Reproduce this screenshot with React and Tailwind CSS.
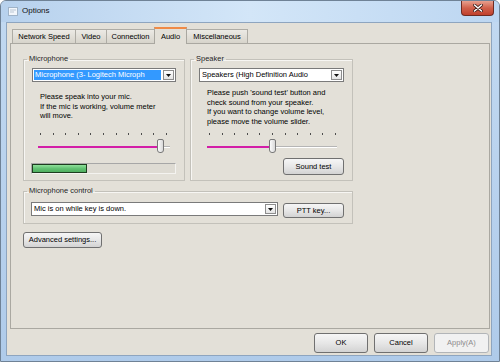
import { Fragment } from 'react';

const tabs = [
  { label: 'Network Speed', width: 'w-[64px]' },
  { label: 'Video', width: 'w-[32px]' },
  { label: 'Connection', width: 'w-[49px]' },
  { label: 'Audio', width: 'w-[33px]', active: true },
  { label: 'Miscellaneous', width: 'w-[62px]' },
];

function DropArrow() {
  return (
    <div className="m-px flex w-[11px] items-center justify-center border border-[#8d8d8d] bg-gradient-to-b from-white to-[#e4e4e4]">
      <svg width="5" height="3" viewBox="0 0 5 3">
        <path d="M0 0H5L2.5 3Z" fill="#111" />
      </svg>
    </div>
  );
}

function Combo({ className, children, selected }) {
  return (
    <div className={`flex h-[14px] border border-[#7a7a7a] bg-white ${className}`}>
      <div className={`m-px flex flex-1 items-center overflow-hidden whitespace-nowrap px-px ${selected ? 'bg-[#3399ff] text-white' : 'text-black'}`}>
        {children}
      </div>
      <DropArrow />
    </div>
  );
}

function Button({ className, children, disabled }) {
  return (
    <div
      className={`flex items-center justify-center rounded-[3px] border ${
        disabled
          ? 'border-[#b2b5b8] bg-[#f1f1f1] text-[#8c8c8c]'
          : 'border-[#707070] bg-gradient-to-b from-[#f6f6f6] via-[#e7e7e7] to-[#d3d3d3] text-black'
      } ${className}`}
    >
      {children}
    </div>
  );
}

function Group({ label, className, children }) {
  return (
    <fieldset className={`border border-[#c3c1ba] shadow-[inset_1px_1px_0_#f7f6f3] ${className}`}>
      <legend className="ml-[3px] px-[2px] leading-[10px] text-[#1e1e1e]">{label}</legend>
      {children}
    </fieldset>
  );
}

function Slider({ className, fillClass, thumbClass, tickPad }) {
  return (
    <div className={`relative h-[23px] ${className}`}>
      <div className={`flex justify-between pt-[2px] ${tickPad}`}>
        {Array.from({ length: 11 }).map((_, i) => (
          <span key={i} className="h-[2px] w-px bg-[#4d4d4d]" />
        ))}
      </div>
      <div className="mt-[11px] flex h-[2px]">
        <div className={`h-full bg-[#d31ea8] ${fillClass}`} />
        <div className="h-full flex-1 border-b border-white bg-[#b5b5b5]" />
      </div>
      <div
        className={`absolute top-[8px] h-[14px] w-[7px] rounded-[2px] rounded-b-[3px] border border-[#787878] bg-gradient-to-r from-[#fbfbfb] to-[#d9d9d9] ${thumbClass}`}
      />
    </div>
  );
}

export default function App() {
  return (
    <div className="flex h-[362px] w-[500px] flex-col overflow-hidden rounded-t-[6px] border border-[#6f8296] bg-gradient-to-b from-[#c2d9f1] to-[#afcbea] font-['Liberation_Sans',Arial,sans-serif] text-[7.5px] text-black">
      {/* title bar */}
      <div className="flex h-[21px] shrink-0 items-start bg-gradient-to-r from-[#b7d1ed] via-[#d3e6f8] to-[#bcd6f1]">
        <svg className="ml-[7px] mt-[6px]" width="10" height="9" viewBox="0 0 10 9">
          <rect x="0.5" y="0.5" width="9" height="8" fill="#f2f6fb" stroke="#9fb3c8" />
          <path d="M2 3H8M2 5H6" stroke="#b9c6d4" />
        </svg>
        <span className="ml-[4px] mt-[5px] text-[8px] leading-[10px] text-[#111]">Options</span>
        <div className="ml-auto mr-[5px] flex h-[15px] w-[33px] items-center justify-center rounded-b-[4px] border border-t-0 border-[#6e2b22] bg-gradient-to-b from-[#e7a08f] via-[#d0604b] to-[#c0402c]">
          <svg width="10" height="8" viewBox="0 0 10 8">
            <path d="M1.5 1L8.5 7M8.5 1L1.5 7" stroke="#3d1a15" strokeWidth="3" strokeLinecap="round" />
            <path d="M1.5 1L8.5 7M8.5 1L1.5 7" stroke="#ffffff" strokeWidth="1.6" strokeLinecap="round" />
          </svg>
        </div>
      </div>

      {/* client area */}
      <div className="mb-[5px] ml-[5px] mr-[7px] flex flex-1 flex-col border border-[#8ea5bf] bg-[#e3e0d8]">
        <div className="pl-[3px] pr-px pt-[4px]">
          <div className="flex h-[16px] items-end pl-[2px]">
            {tabs.map((tab, i) => (
              <div
                key={tab.label}
                className={`flex items-center justify-center border border-b-0 ${tab.width} ${i > 0 ? '-ml-px' : ''} ${
                  tab.active
                    ? 'relative z-10 -mb-px h-[17px] border-[#a9a7a0] border-t-2 border-t-[#f08a46] bg-[#e3e0d8]'
                    : 'h-[14px] border-[#aeaca5] bg-gradient-to-b from-[#eceae5] to-[#d7d4cb]'
                }`}
              >
                {tab.label}
              </div>
            ))}
          </div>

          <div className="h-[286px] border border-[#aaa8a1] bg-[#e3e0d8] pl-[12px] pt-[10px]">
            <div className="flex w-[330px] gap-[5px]">
              <Group label="Microphone" className="w-[162px]">
                <div className="px-[8px] pb-[6px] pt-[4px]">
                  <Combo selected className="w-[144px]">Microphone (3- Logitech Microph</Combo>
                  <div className="ml-[8px] mt-[10px] leading-[9.5px]">
                    Please speak into your mic.
                    <br />
                    If the mic is working, volume meter
                    <br />
                    will move.
                  </div>
                  <Slider className="ml-[6px] mt-[10px] w-[132px]" tickPad="pl-[2px] pr-[3px]" fillClass="w-[119px]" thumbClass="left-[119px]" />
                  <div className="mt-[9px] flex h-[11px] w-[145px] -ml-px border border-[#a7a7a7] border-b-[#f4f3f0] border-r-[#f4f3f0] bg-[#dedbd3]">
                    <div className="h-full w-[55px] border border-[#1d3d1f] bg-gradient-to-b from-[#8fe09b] via-[#62c273] to-[#4fae5f]" />
                  </div>
                </div>
              </Group>

              <Group label="Speaker" className="w-[163px]">
                <div className="flex flex-col px-[8px] pb-[5px] pt-[4px]">
                  <Combo className="w-[145px]">Speakers (High Definition Audio</Combo>
                  <div className="ml-[8px] mt-[6px] leading-[9.5px]">
                    Please push 'sound test' button and
                    <br />
                    check sound from your speaker.
                    <br />
                    If you want to change volume level,
                    <br />
                    please move the volume slider.
                  </div>
                  <Slider className="ml-[8px] mt-[5px] w-[130px]" tickPad="pl-[2px] pr-px" fillClass="w-[62px]" thumbClass="left-[62px]" />
                  <Button className="mt-[4px] h-[17px] w-[61px] self-end">Sound test</Button>
                </div>
              </Group>
            </div>

            <Group label="Microphone control" className="mt-[5px] w-[330px]">
              <div className="flex items-start gap-[5px] pb-[5px] pl-[7px] pt-[6px]">
                <Combo className="w-[247px]">Mic is on while key is down.</Combo>
                <Button className="mt-px h-[15px] w-[61px]">PTT key...</Button>
              </div>
            </Group>

            <Button className="mt-[8px] h-[16px] w-[79px]">Advanced settings...</Button>
          </div>
        </div>

        <div className="mt-[4px] flex justify-end gap-[6px] pr-[2px]">
          {['OK', 'Cancel'].map((label) => (
            <Fragment key={label}>
              <Button className="h-[20px] w-[54px]">{label}</Button>
            </Fragment>
          ))}
          <Button disabled className="h-[20px] w-[55px]">Apply(A)</Button>
        </div>
      </div>
    </div>
  );
}
